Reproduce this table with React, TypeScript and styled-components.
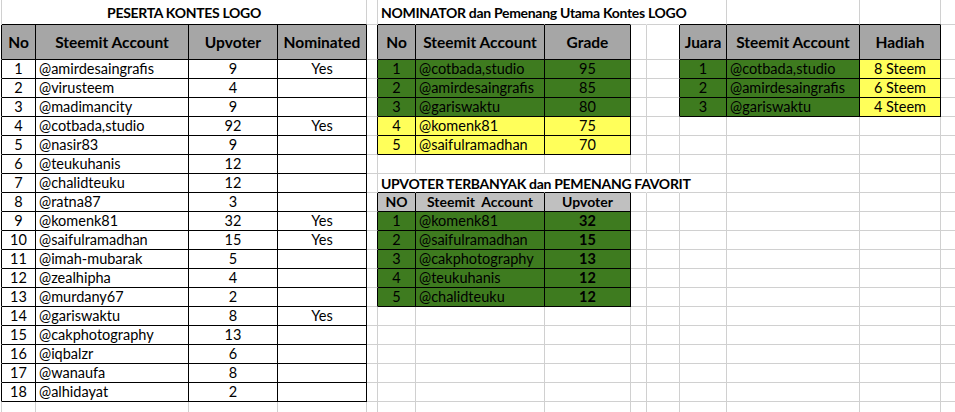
import React from 'react';
import styled, { createGlobalStyle } from 'styled-components';

const GRID = '#d0d0d0';
const INK = '#000000';
const HEAD = '#a6a6a6';
const HEAD_LIGHT = '#c0c0c0';
const GREEN = '#3e7b1f';
const YELLOW = '#ffff5a';

// column widths (first is the 1px sheet edge), row heights
const COLS = [1, 34, 153, 89, 89, 11, 38, 129, 86, 16, 33, 47, 133, 81, 120];
const ROWS = [25, 35, ...Array(19).fill(19)];

type Kind = 'empty' | 'title' | 'head' | 'subhead' | 'data';
type Spec = {
  kind: Kind;
  text?: string;
  bg?: string;
  align?: 'left' | 'center';
  strong?: boolean;
  span?: number;
  table?: boolean;
  noRight?: boolean;
  covered?: boolean;
};

const GlobalStyle = createGlobalStyle`
  html, body {
    margin: 0;
    padding: 0;
    background: #ffffff;
    overflow: hidden;
  }
  body {
    font-family: Lato, "Open Sans", "Liberation Sans", sans-serif;
    color: #000000;
  }
`;

const Page = styled.main`
  width: 955px;
  height: 412px;
  overflow: hidden;
  padding-left: 1px;
  box-sizing: border-box;
`;

const Sheet = styled.div`
  display: grid;
  grid-template-columns: ${COLS.map((w) => `${w}px`).join(' ')};
  grid-template-rows: ${ROWS.map((h) => `${h}px`).join(' ')};
`;

const Cell = styled.div<{
  $right: string;
  $bottom: string;
  $bg?: string;
  $span?: number;
  $align?: 'left' | 'center';
}>`
  box-sizing: border-box;
  grid-column: span ${(p) => p.$span ?? 1};
  min-width: 0;
  display: flex;
  align-items: center;
  justify-content: ${(p) => (p.$align === 'left' ? 'flex-start' : 'center')};
  padding: 0 3px;
  white-space: nowrap;
  border-right: 1px solid ${(p) => p.$right};
  border-bottom: 1px solid ${(p) => p.$bottom};
  background: ${(p) => p.$bg ?? 'transparent'};
  font-size: 14px;
  line-height: 1;
`;

const EmptyCell = styled(Cell)`
  padding: 0;
`;

const TitleCell = styled(Cell)`
  font-size: 14px;
  font-weight: 700;
  letter-spacing: -0.3px;
  padding-top: 1px;
`;

const HeadCell = styled(Cell)`
  font-size: 15.5px;
  font-weight: 700;
  padding-top: 1px;
`;

const SubHeadCell = styled(Cell)`
  font-size: 14px;
  font-weight: 700;
`;

const DataCell = styled(Cell)<{ $strong?: boolean }>`
  font-size: 14.5px;
  font-weight: ${(p) => (p.$strong ? 700 : 400)};
  padding-top: 1px;
`;

const CELL_BY_KIND = {
  empty: EmptyCell,
  title: TitleCell,
  head: HeadCell,
  subhead: SubHeadCell,
  data: DataCell,
};

const participants: [number, string, number, string][] = [
  [1, '@amirdesaingrafis', 9, 'Yes'],
  [2, '@virusteem', 4, ''],
  [3, '@madimancity', 9, ''],
  [4, '@cotbada,studio', 92, 'Yes'],
  [5, '@nasir83', 9, ''],
  [6, '@teukuhanis', 12, ''],
  [7, '@chalidteuku', 12, ''],
  [8, '@ratna87', 3, ''],
  [9, '@komenk81', 32, 'Yes'],
  [10, '@saifulramadhan', 15, 'Yes'],
  [11, '@imah-mubarak', 5, ''],
  [12, '@zealhipha', 4, ''],
  [13, '@murdany67', 2, ''],
  [14, '@gariswaktu', 8, 'Yes'],
  [15, '@cakphotography', 13, ''],
  [16, '@iqbalzr', 6, ''],
  [17, '@wanaufa', 8, ''],
  [18, '@alhidayat', 2, ''],
];

const nominators: [number, string, number, string][] = [
  [1, '@cotbada,studio', 95, GREEN],
  [2, '@amirdesaingrafis', 85, GREEN],
  [3, '@gariswaktu', 80, GREEN],
  [4, '@komenk81', 75, YELLOW],
  [5, '@saifulramadhan', 70, YELLOW],
];

const winners: [number, string, string][] = [
  [1, '@cotbada,studio', '8 Steem'],
  [2, '@amirdesaingrafis', '6 Steem'],
  [3, '@gariswaktu', '4 Steem'],
];

const favourites: [number, string, number][] = [
  [1, '@komenk81', 32],
  [2, '@saifulramadhan', 15],
  [3, '@cakphotography', 13],
  [4, '@teukuhanis', 12],
  [5, '@chalidteuku', 12],
];

function buildSheet(): Spec[][] {
  const g: Spec[][] = ROWS.map(() => COLS.map(() => ({ kind: 'empty' } as Spec)));
  const put = (r: number, c: number, s: Spec) => {
    g[r][c] = { ...s, table: true };
  };

  // Titles
  g[0][1] = { kind: 'title', text: 'PESERTA KONTES LOGO', span: 4 };
  for (let c = 2; c <= 4; c++) g[0][c] = { kind: 'empty', covered: true };
  g[0][6] = { kind: 'title', text: 'NOMINATOR dan Pemenang Utama Kontes LOGO', align: 'left' };
  g[8][6] = { kind: 'title', text: 'UPVOTER TERBANYAK dan PEMENANG FAVORIT', align: 'left' };
  for (let c = 6; c <= 10; c++) {
    g[0][c].noRight = true;
    g[8][c].noRight = true;
  }

  // Table 1: participants
  ['No', 'Steemit Account', 'Upvoter', 'Nominated'].forEach((t, i) =>
    put(1, 1 + i, { kind: 'head', text: t, bg: HEAD })
  );
  participants.forEach(([no, acc, up, nom], i) => {
    const r = 2 + i;
    put(r, 1, { kind: 'data', text: String(no) });
    put(r, 2, { kind: 'data', text: acc, align: 'left' });
    put(r, 3, { kind: 'data', text: String(up) });
    put(r, 4, { kind: 'data', text: nom });
  });

  // Table 2: nominators
  ['No', 'Steemit Account', 'Grade'].forEach((t, i) =>
    put(1, 6 + i, { kind: 'head', text: t, bg: HEAD })
  );
  nominators.forEach(([no, acc, grade, bg], i) => {
    const r = 2 + i;
    put(r, 6, { kind: 'data', text: String(no), bg });
    put(r, 7, { kind: 'data', text: acc, align: 'left', bg });
    put(r, 8, { kind: 'data', text: String(grade), bg });
  });

  // Table 3: winners
  ['Juara', 'Steemit Account', 'Hadiah'].forEach((t, i) =>
    put(1, 11 + i, { kind: 'head', text: t, bg: HEAD })
  );
  winners.forEach(([no, acc, prize], i) => {
    const r = 2 + i;
    put(r, 11, { kind: 'data', text: String(no), bg: GREEN });
    put(r, 12, { kind: 'data', text: acc, align: 'left', bg: GREEN });
    put(r, 13, { kind: 'data', text: prize, bg: YELLOW });
  });

  // Table 4: favourites
  ['NO', 'Steemit\u00a0 Account', 'Upvoter'].forEach((t, i) =>
    put(9, 6 + i, { kind: 'subhead', text: t, bg: HEAD_LIGHT })
  );
  favourites.forEach(([no, acc, up], i) => {
    const r = 10 + i;
    put(r, 6, { kind: 'data', text: String(no), bg: GREEN });
    put(r, 7, { kind: 'data', text: acc, align: 'left', bg: GREEN });
    put(r, 8, { kind: 'data', text: String(up), bg: GREEN, strong: true });
  });

  return g;
}

const sheet = buildSheet();

const inTable = (r: number, c: number) => !!sheet[r]?.[c]?.table;

const rightColor = (r: number, c: number, s: Spec) => {
  if (s.noRight) return 'transparent';
  const end = c + (s.span ?? 1) - 1;
  return inTable(r, end) || inTable(r, end + 1) ? INK : GRID;
};

const bottomColor = (r: number, c: number, s: Spec) => {
  const span = s.span ?? 1;
  for (let k = c; k < c + span; k++) {
    if (inTable(r, k) || inTable(r + 1, k)) return INK;
  }
  return GRID;
};

export default function App() {
  return (
    <>
      <GlobalStyle />
      <Page>
        <Sheet>
          {sheet.map((row, r) =>
            row.map((s, c) => {
              if (s.covered) return null;
              const Comp = CELL_BY_KIND[s.kind] as typeof DataCell;
              return (
                <Comp
                  key={`${r}-${c}`}
                  $right={rightColor(r, c, s)}
                  $bottom={bottomColor(r, c, s)}
                  $bg={s.bg}
                  $span={s.span}
                  $align={s.align}
                  $strong={s.strong}
                >
                  {s.text}
                </Comp>
              );
            })
          )}
        </Sheet>
      </Page>
    </>
  );
}
